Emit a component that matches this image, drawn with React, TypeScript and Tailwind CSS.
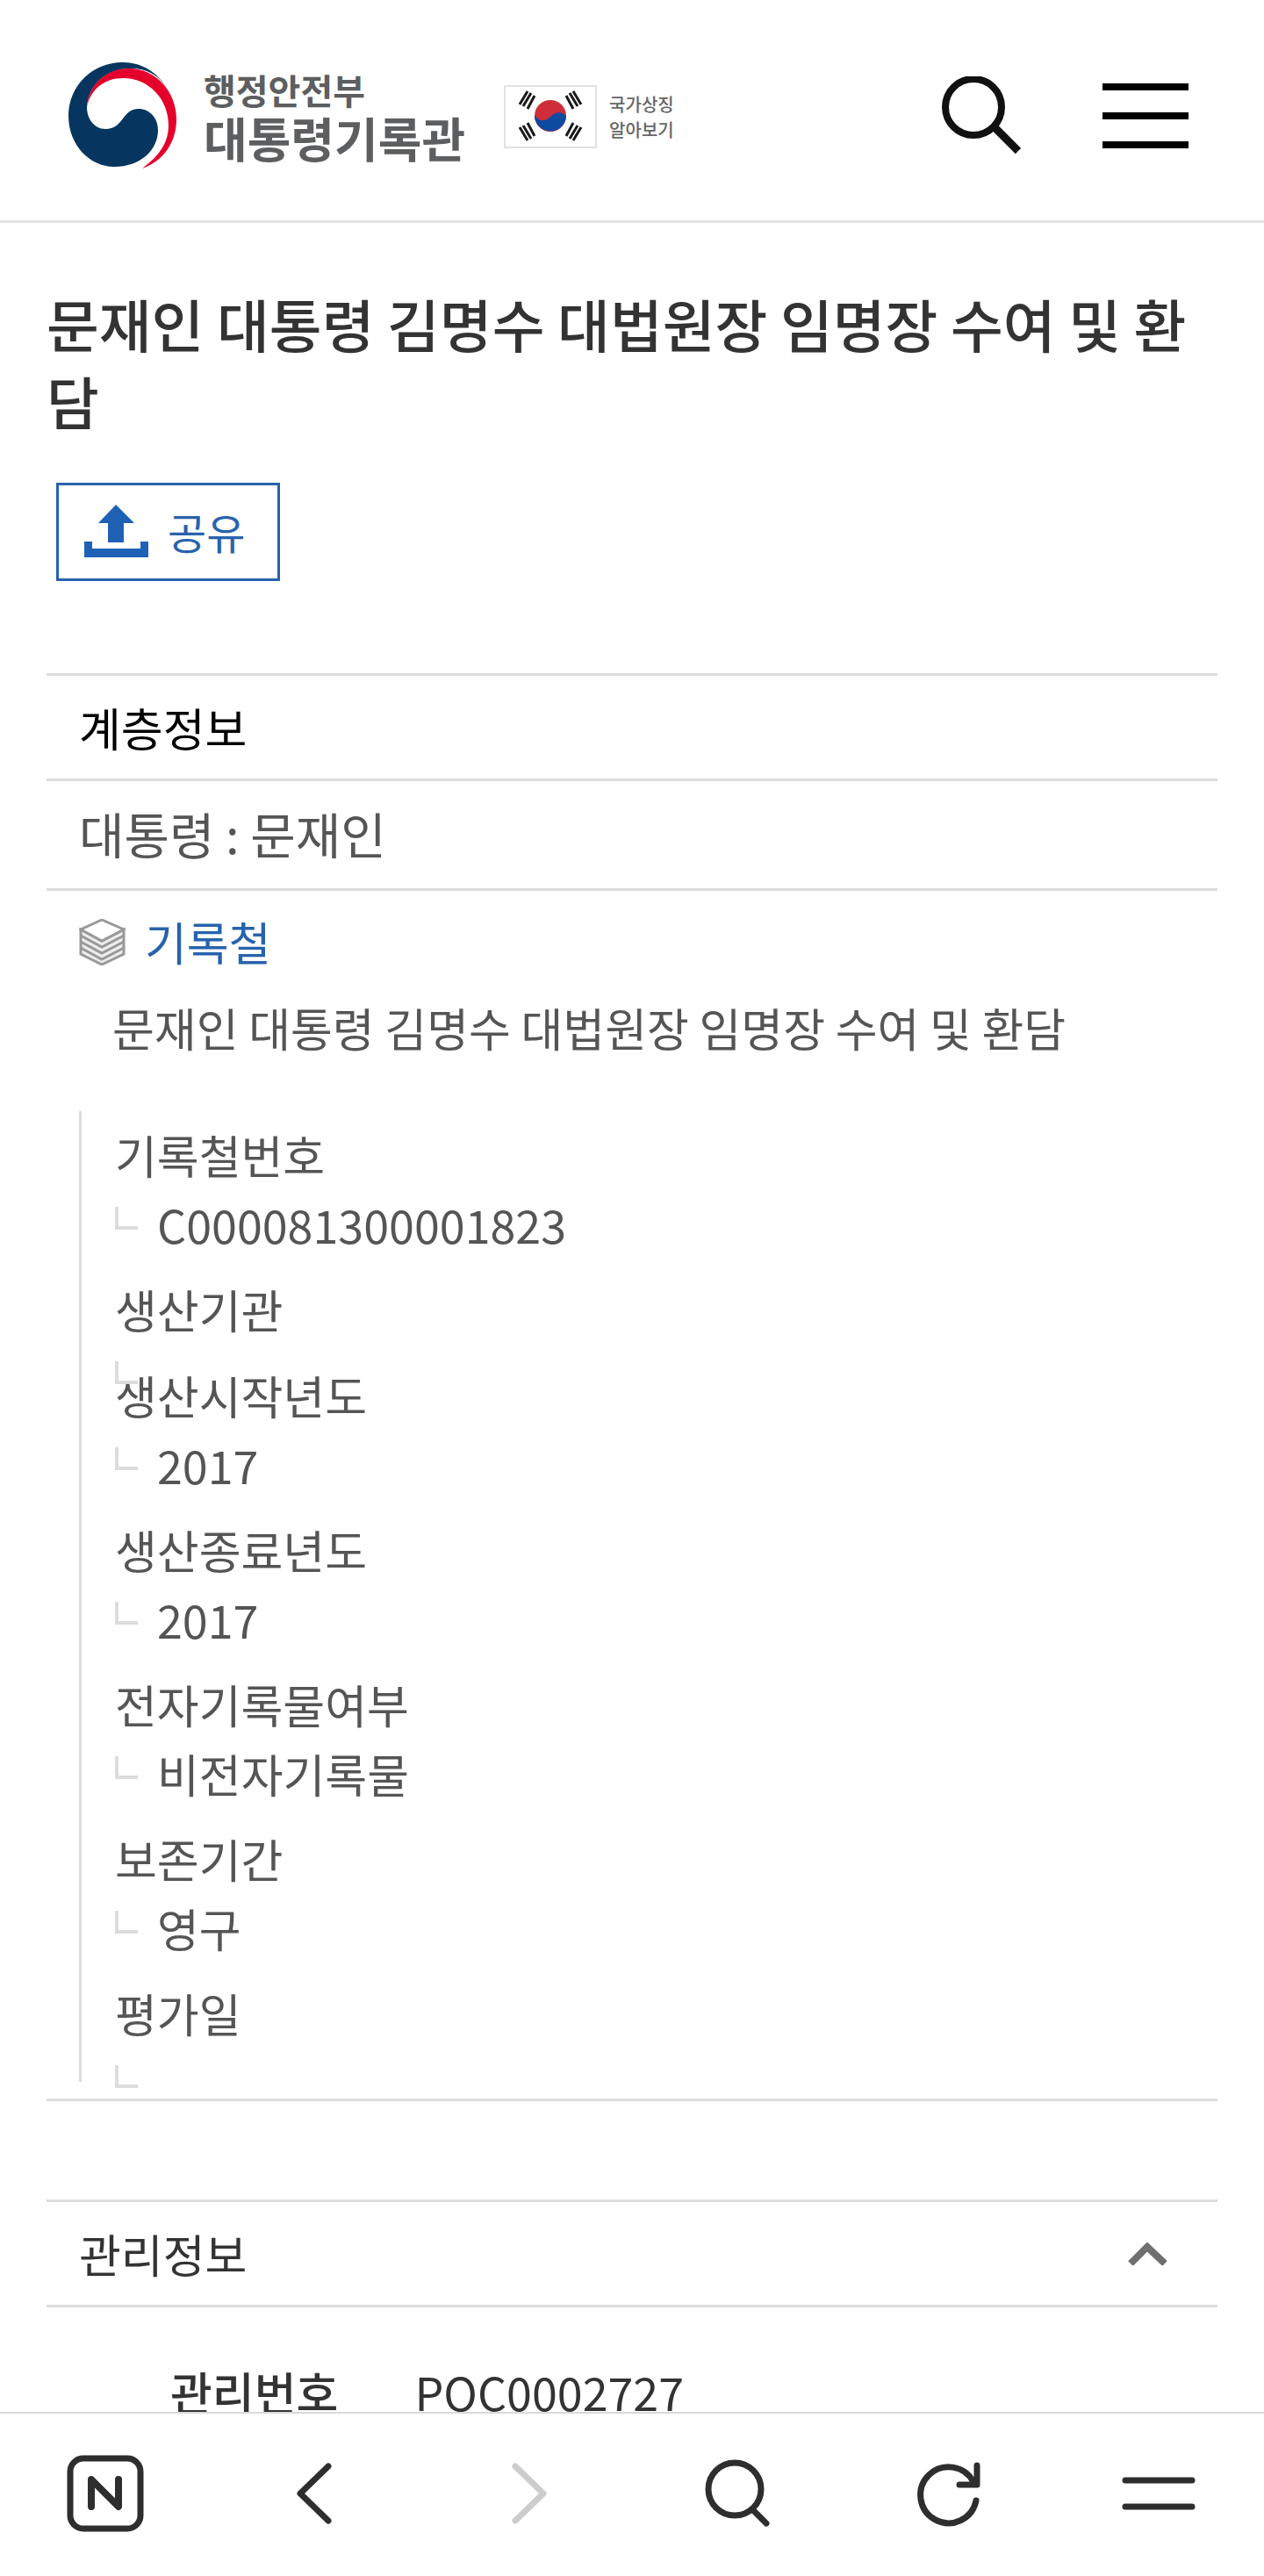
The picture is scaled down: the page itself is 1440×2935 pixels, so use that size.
import type { ReactNode } from "react";

const TITLE = "문재인 대통령 김명수 대법원장 임명장 수여 및 환담";

const RECORD_FIELDS = [
  { label: "기록철번호", value: "C000081300001823" },
  { label: "생산기관", value: "" },
  { label: "생산시작년도", value: "2017" },
  { label: "생산종료년도", value: "2017" },
  { label: "전자기록물여부", value: "비전자기록물" },
  { label: "보존기간", value: "영구" },
  { label: "평가일", value: "" },
];

function GovernmentMark() {
  return (
    <svg width="125" height="124" viewBox="0 0 125 124" aria-hidden>
      <path
        d="M113 30C102 12 84 1 63 1C28 1 1 28 1 62C1 95 25 120 53 120C83 120 103 101 103 78C103 64 93 54 81 54C62 54 64 77 43 77C31 77 22 66 22 52C24 26 44 8 72 8C90 8 103 15 113 30Z"
        fill="#06365f"
      />
      <path
        d="M22 52C24 26 44 8 70 8C100 8 124 34 124 66C124 92 109 114 85 122C105 107 115 92 115 73C115 42 92 19 63 19C42 19 26 32 22 52Z"
        fill="#e4002b"
      />
    </svg>
  );
}

function FlagIcon() {
  return (
    <svg width="106" height="72" viewBox="0 0 106 72" aria-hidden>
      <rect x="1" y="1" width="104" height="70" fill="#fff" stroke="#e2e2e2" strokeWidth="2" />
      <circle cx="53" cy="35" r="18" fill="#cd2e3a" />
      <path d="M35 34C40 42 47 42 53 36C59 30 66 30 71 35A18 18 0 0 1 35 34Z" fill="#0f4aa1" />
      <g stroke="#1a1a1a" strokeWidth="3">
        <path d="M18 22L27 7M22 24L31 9M27 27L35 12" />
        <path d="M88 22L79 7M84 24L75 9M79 27L71 12" />
        <path d="M18 48L27 63M22 46L31 61M27 43L35 58" />
        <path d="M88 48L79 63M84 46L75 61M79 43L71 58" />
      </g>
    </svg>
  );
}

function UploadIcon() {
  return (
    <svg width="73" height="61" viewBox="0 0 73 61" fill="#1f62b5" aria-hidden>
      <path d="M36 0L57 21H45V43H27V21H16Z" />
      <path d="M0 42H9V50H64V42H73V60H0Z" />
    </svg>
  );
}

function LayersIcon() {
  return (
    <svg
      width="53"
      height="53"
      viewBox="0 0 53 53"
      fill="none"
      stroke="#999"
      strokeWidth="3"
      aria-hidden
    >
      <path d="M2 12V40L26 52L51 40V12L26 25Z" fill="#ececec" />
      <path d="M26 1L51 12L26 25L2 12Z" fill="#fff" />
      <path d="M2 19L26 32L51 19M2 26L26 39L51 26M2 33L26 46L51 33" />
    </svg>
  );
}

function ToolbarIcon({ children }: { children: ReactNode }) {
  return (
    <svg
      width="90"
      height="90"
      viewBox="0 0 90 90"
      fill="none"
      stroke="currentColor"
      strokeWidth="7"
      strokeLinecap="round"
      strokeLinejoin="round"
      aria-hidden
    >
      {children}
    </svg>
  );
}

function Header() {
  return (
    <header className="flex h-[254px] items-center border-b-3 border-[#e2e2e2] pt-3 pr-[86px] pl-[77px]">
      <a href="#" className="flex items-center gap-[30px] text-[#5d5e60]">
        <GovernmentMark />
        <span className="flex flex-col pt-1 font-bold">
          <span className="text-[40px] leading-[46px]">행정안전부</span>
          <span className="text-[54px] leading-[64px]">대통령기록관</span>
        </span>
      </a>
      <a
        href="#"
        className="ml-11 flex items-center gap-[14px] pt-[2px] text-[20px] leading-[29px] font-medium text-[#666]"
      >
        <FlagIcon />
        <span>
          국가상징
          <br />
          알아보기
        </span>
      </a>
      <div className="ml-auto flex items-center gap-[93px]">
        <button type="button" aria-label="검색">
          <svg width="90" height="90" viewBox="0 0 90 90" fill="none" stroke="#111" aria-hidden>
            <circle cx="36" cy="35" r="32" strokeWidth="8" />
            <path d="M60 58L87 85" strokeWidth="9" />
          </svg>
        </button>
        <button type="button" aria-label="전체메뉴" className="flex flex-col gap-[25px]">
          <span className="h-2 w-[98px] bg-black" />
          <span className="h-2 w-[98px] bg-black" />
          <span className="h-2 w-[98px] bg-black" />
        </button>
      </div>
    </header>
  );
}

function RecordField({ label, value }: { label: string; value: string }) {
  return (
    <div className="pb-[18px]">
      <dt className="leading-[80px]">{label}</dt>
      <dd className="relative pl-12 leading-[78px]">
        <span
          aria-hidden
          className="absolute top-[19px] left-0 h-[26px] w-[26px] border-b-4 border-l-4 border-[#dcdcdc] bg-white"
        />
        {value}
      </dd>
    </div>
  );
}

function Toolbar() {
  return (
    <nav className="fixed inset-x-0 bottom-0 grid h-[187px] grid-cols-6 place-items-center border-t-2 border-[#d9d9d9] bg-white pb-1 text-[#2e2e2e]">
      <button type="button" aria-label="네이버 홈">
        <ToolbarIcon>
          <rect x="5" y="5" width="80" height="80" rx="15" />
          <path d="M29 60V29L60 60V29" strokeWidth="8" />
        </ToolbarIcon>
      </button>
      <button type="button" aria-label="뒤로">
        <ToolbarIcon>
          <path d="M59 14L27 45L59 76" />
        </ToolbarIcon>
      </button>
      <button type="button" aria-label="앞으로" className="text-[#cccccc]">
        <ToolbarIcon>
          <path d="M32 14L64 45L32 76" />
        </ToolbarIcon>
      </button>
      <button type="button" aria-label="검색">
        <ToolbarIcon>
          <circle cx="42" cy="40" r="30" />
          <path d="M63 64L78 79" />
        </ToolbarIcon>
      </button>
      <button type="button" aria-label="새로고침">
        <ToolbarIcon>
          <path d="M77 53A32 32 0 1 1 74 32" />
          <path d="M78 13V35H58" />
        </ToolbarIcon>
      </button>
      <button type="button" aria-label="메뉴">
        <ToolbarIcon>
          <path d="M7 30H83M7 60H83" />
        </ToolbarIcon>
      </button>
    </nav>
  );
}

export default function App() {
  return (
    <div className="h-screen overflow-hidden bg-white font-['Noto_Sans_CJK_KR',sans-serif] text-[52px] text-[#333]">
      <Header />
      <main className="px-[53px] pt-[70px]">
        <h1 className="text-[65px] leading-[88px] font-medium break-all">{TITLE}</h1>
        <button
          type="button"
          className="mt-[50px] ml-[11px] flex h-[112px] w-[255px] items-center gap-[22px] border-3 border-[#2763ad] pb-[2px] pl-[29px] text-[48px] text-[#2763ad]"
        >
          <UploadIcon />
          공유
        </button>

        <section className="mt-[105px] border-y-3 border-[#dcdcdc]">
          <h2 className="h-[120px] border-b-3 border-[#dcdcdc] pl-[37px] leading-[117px] text-black">
            계층정보
          </h2>
          <p className="h-[125px] border-b-3 border-[#dcdcdc] pl-[37px] text-[56px] leading-[118px] text-[#555]">
            대통령 : 문재인
          </p>
          <div className="flex h-[112px] items-center pt-1 pl-[37px] text-[#2763ad]">
            <LayersIcon />
            <a href="#" className="ml-[22px]">
              기록철
            </a>
          </div>
          <p className="pl-[75px] leading-[88px] text-[#555]">{TITLE}</p>
          <dl className="mt-[51px] mb-[19px] ml-[37px] border-l-3 border-[#dcdcdc] pt-[10px] pb-5 pl-[38px] text-[#555]">
            {RECORD_FIELDS.map((field) => (
              <RecordField key={field.label} {...field} />
            ))}
          </dl>
        </section>

        <section className="mt-[112px] border-t-3 border-[#dcdcdc]">
          <h2>
            <button
              type="button"
              className="flex h-[120px] w-full items-center justify-between border-b-3 border-[#dcdcdc] pr-[57px] pl-[37px]"
            >
              관리정보
              <svg width="45" height="26" viewBox="0 0 45 26" fill="none" aria-hidden>
                <path d="M3 24L22 5L42 24" stroke="#707070" strokeWidth="8" />
              </svg>
            </button>
          </h2>
          <table className="mt-[57px] ml-[141px]">
            <tbody>
              <tr>
                <th scope="row" className="pr-[87px] text-left font-medium">
                  관리번호
                </th>
                <td>PQC0002727</td>
              </tr>
            </tbody>
          </table>
        </section>
      </main>
      <Toolbar />
    </div>
  );
}
